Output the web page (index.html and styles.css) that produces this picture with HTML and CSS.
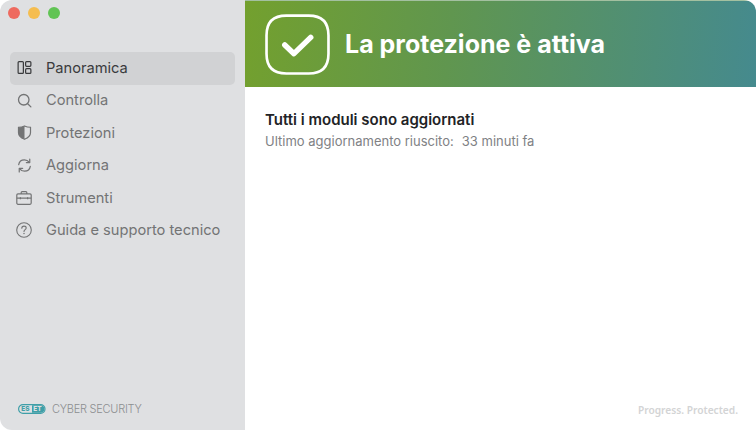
FILE: index.html
```html
<!DOCTYPE html>
<html lang="it">

<head>
    <meta charset="utf-8">
    <title>ESET Cyber Security</title>
    <link rel="stylesheet" href="styles.css">
</head>

<body>
    <div class="window">
        <aside class="sidebar">
            <div class="lights">
                <span class="light red"></span>
                <span class="light yellow"></span>
                <span class="light green"></span>
            </div>

            <nav class="menu">
                <a class="item active">
                    <svg class="ico" viewBox="0 0 16 16" fill="none" stroke="currentColor" stroke-width="1.3">
                        <rect x="1.2" y="1.7" width="5.6" height="12.6" rx="1"/>
                        <rect x="9.2" y="1.7" width="5.6" height="5" rx="1"/>
                        <rect x="9.2" y="9.3" width="5.6" height="5" rx="1"/>
                    </svg>
                    <span>Panoramica</span>
                </a>
                <a class="item">
                    <svg class="ico" viewBox="0 0 16 16" fill="none" stroke="currentColor" stroke-width="1.4">
                        <circle cx="7.2" cy="7.2" r="5.6"/>
                        <path d="M11.4 11.4 L14.8 14.8" stroke-linecap="round"/>
                    </svg>
                    <span>Controlla</span>
                </a>
                <a class="item">
                    <svg class="ico" viewBox="0 0 16 16">
                        <path d="M8 1 C10 1.9 12 2.3 14.4 2.4 V8 C14.4 11.4 11.8 13.8 8 15.2 C4.2 13.8 1.6 11.4 1.6 8 V2.4 C4 2.3 6 1.9 8 1 Z" fill="none" stroke="currentColor" stroke-width="1.3"/>
                        <path d="M8 1 C6 1.9 4 2.3 1.6 2.4 V8 C1.6 11.4 4.2 13.8 8 15.2 Z" fill="currentColor"/>
                    </svg>
                    <span>Protezioni</span>
                </a>
                <a class="item">
                    <svg class="ico" viewBox="0 0 16 16" fill="none" stroke="currentColor" stroke-width="1.3" stroke-linecap="round">
                        <path d="M1.8 7 C2.3 4 4.8 1.9 7.9 1.9 C10 1.9 11.8 2.9 13 4.5"/>
                        <path d="M14.2 9 C13.7 12 11.2 14.1 8.1 14.1 C6 14.1 4.2 13.1 3 11.5"/>
                        <path d="M13.6 1.2 V4.9 H10" stroke-linejoin="round"/>
                        <path d="M2.4 14.8 V11.1 H6" stroke-linejoin="round"/>
                    </svg>
                    <span>Aggiorna</span>
                </a>
                <a class="item">
                    <svg class="ico wide" viewBox="0 0 16 16" fill="none" stroke="currentColor" stroke-width="1.2">
                        <rect x="0.8" y="3.9" width="14.4" height="10.4" rx="1.2"/>
                        <path d="M5.2 3.9 V2.5 C5.2 2 5.6 1.6 6.1 1.6 H9.9 C10.4 1.6 10.8 2 10.8 2.5 V3.9"/>
                        <path d="M0.8 8.2 H15.2"/>
                        <path d="M4.4 7.2 V9.2 M11.6 7.2 V9.2"/>
                    </svg>
                    <span>Strumenti</span>
                </a>
                <a class="item">
                    <svg class="ico wide" viewBox="0 0 16 16" fill="none" stroke="currentColor" stroke-width="1.1">
                        <circle cx="8" cy="8" r="7.3"/>
                        <path d="M5.8 6.2 C5.8 4.9 6.8 4.1 8 4.1 C9.3 4.1 10.2 5 10.2 6 C10.2 7.6 8 7.6 8 9.4" stroke-linecap="round"/>
                        <circle cx="8" cy="11.6" r="0.75" fill="currentColor" stroke="none"/>
                    </svg>
                    <span>Guida e supporto tecnico</span>
                </a>
            </nav>

            <div class="brand">
                <svg class="eset" viewBox="0 0 28 10">
                    <rect x="0.6" y="0.6" width="26.4" height="8.8" rx="4.4" fill="none" stroke="#3f9fa8" stroke-width="1.2"/>
                    <path d="M14 1.2 H22.6 C25 1.2 26.4 2.8 26.4 5 C26.4 7.2 25 8.8 22.6 8.8 H14 Z" fill="#3f9fa8"/>
                    <text x="3.2" y="7.4" class="eset-a">ES</text>
                    <text x="15.2" y="7.4" class="eset-b">ET</text>
                </svg>
                <span>CYBER SECURITY</span>
            </div>
        </aside>

        <main class="content">
            <header class="banner">
                <svg class="badge" viewBox="0 0 64 60" fill="none" stroke="#fff">
                    <path d="M21 1.5 H43 C56 1.5 62.5 8 62.5 21 V39 C62.5 52 56 58.5 43 58.5 H21 C8 58.5 1.5 52 1.5 39 V21 C1.5 8 8 1.5 21 1.5 Z" stroke-width="2.6"/>
                    <path d="M19.5 30.5 L28.5 39 L45 23" stroke-width="5.4" stroke-linecap="round" stroke-linejoin="round"/>
                </svg>
                <h1>La protezione è attiva</h1>
            </header>

            <section class="status">
                <h2>Tutti i moduli sono aggiornati</h2>
                <p><span class="lbl">Ultimo aggiornamento riuscito:</span><span>33 minuti fa</span></p>
            </section>

            <div class="slogan">Progress. Protected.</div>
        </main>
    </div>
</body>

</html>
```

FILE: styles.css
```css
html,
body {
    margin: 0;
    height: 100%;
    background: #fff;
}

body {
    font-family: Inter, "Liberation Sans", sans-serif;
}

.window {
    width: 756px;
    height: 430px;
    display: flex;
    border-radius: 12px;
    overflow: hidden;
}

.sidebar {
    width: 245px;
    flex: none;
    display: flex;
    flex-direction: column;
    background: #dfe0e2;
    box-sizing: border-box;
    padding: 7px 10px 0;
}

.lights {
    display: flex;
    gap: 8px;
    margin-left: -2px;
}

.light {
    width: 12px;
    height: 12px;
    border-radius: 50%;
}

.red {
    background: #ee6a5f;
}

.yellow {
    background: #f5bd4f;
}

.green {
    background: #61c454;
}

.menu {
    margin-top: 33px;
    display: flex;
    flex-direction: column;
}

.item {
    height: 32.5px;
    display: flex;
    align-items: center;
    gap: 14px;
    padding-left: 7px;
    padding-bottom: 1px;
    box-sizing: border-box;
    font-size: 14.65px;
    color: #737475;
    border-radius: 5px;
}

.item.active {
    background: #d1d2d4;
    color: #3a3b3d;
}

.ico {
    width: 15px;
    height: 15px;
    flex: none;
}

.ico.wide {
    width: 16px;
    height: 16px;
    margin-left: -1px;
}

.brand {
    margin-top: auto;
    margin-bottom: 14px;
    margin-left: 8px;
    display: flex;
    align-items: center;
    gap: 6px;
    font-size: 11px;
    font-weight: 300;
    letter-spacing: -0.25px;
    color: #8c8e90;
}

.eset {
    width: 28px;
    height: 10px;
    flex: none;
}

.eset-a,
.eset-b {
    font-size: 6.5px;
    font-weight: 800;
    letter-spacing: 0;
}

.eset-a {
    fill: #3f9fa8;
}

.eset-b {
    fill: #dfe0e2;
}

.content {
    flex: 1;
    display: flex;
    flex-direction: column;
    background: #fff;
}

.banner {
    height: 87px;
    flex: none;
    display: flex;
    align-items: center;
    box-sizing: border-box;
    padding-left: 20px;
    gap: 15px;
    background: linear-gradient(95deg, #73a02e 0%, #60964f 40%, #458a8e 100%);
    border-top: 1px solid #a3c0a0;
}

.badge {
    width: 65px;
    height: 61px;
    flex: none;
}

.banner h1 {
    margin: 0;
    font-size: 25px;
    font-weight: 700;
    color: #fff;
}

.status {
    padding: 23px 20px 0;
}

.status h2 {
    margin: 0;
    font-size: 15px;
    font-weight: 600;
    color: #222326;
}

.status p {
    margin: 4px 0 0;
    font-size: 13px;
    color: #808184;
    display: flex;
    gap: 8px;
}

.slogan {
    margin-top: auto;
    margin-bottom: 13px;
    margin-right: 18px;
    text-align: right;
    font-family: "Noto Sans", sans-serif;
    font-size: 10.2px;
    font-weight: 600;
    color: #d3d4d5;
}
```
